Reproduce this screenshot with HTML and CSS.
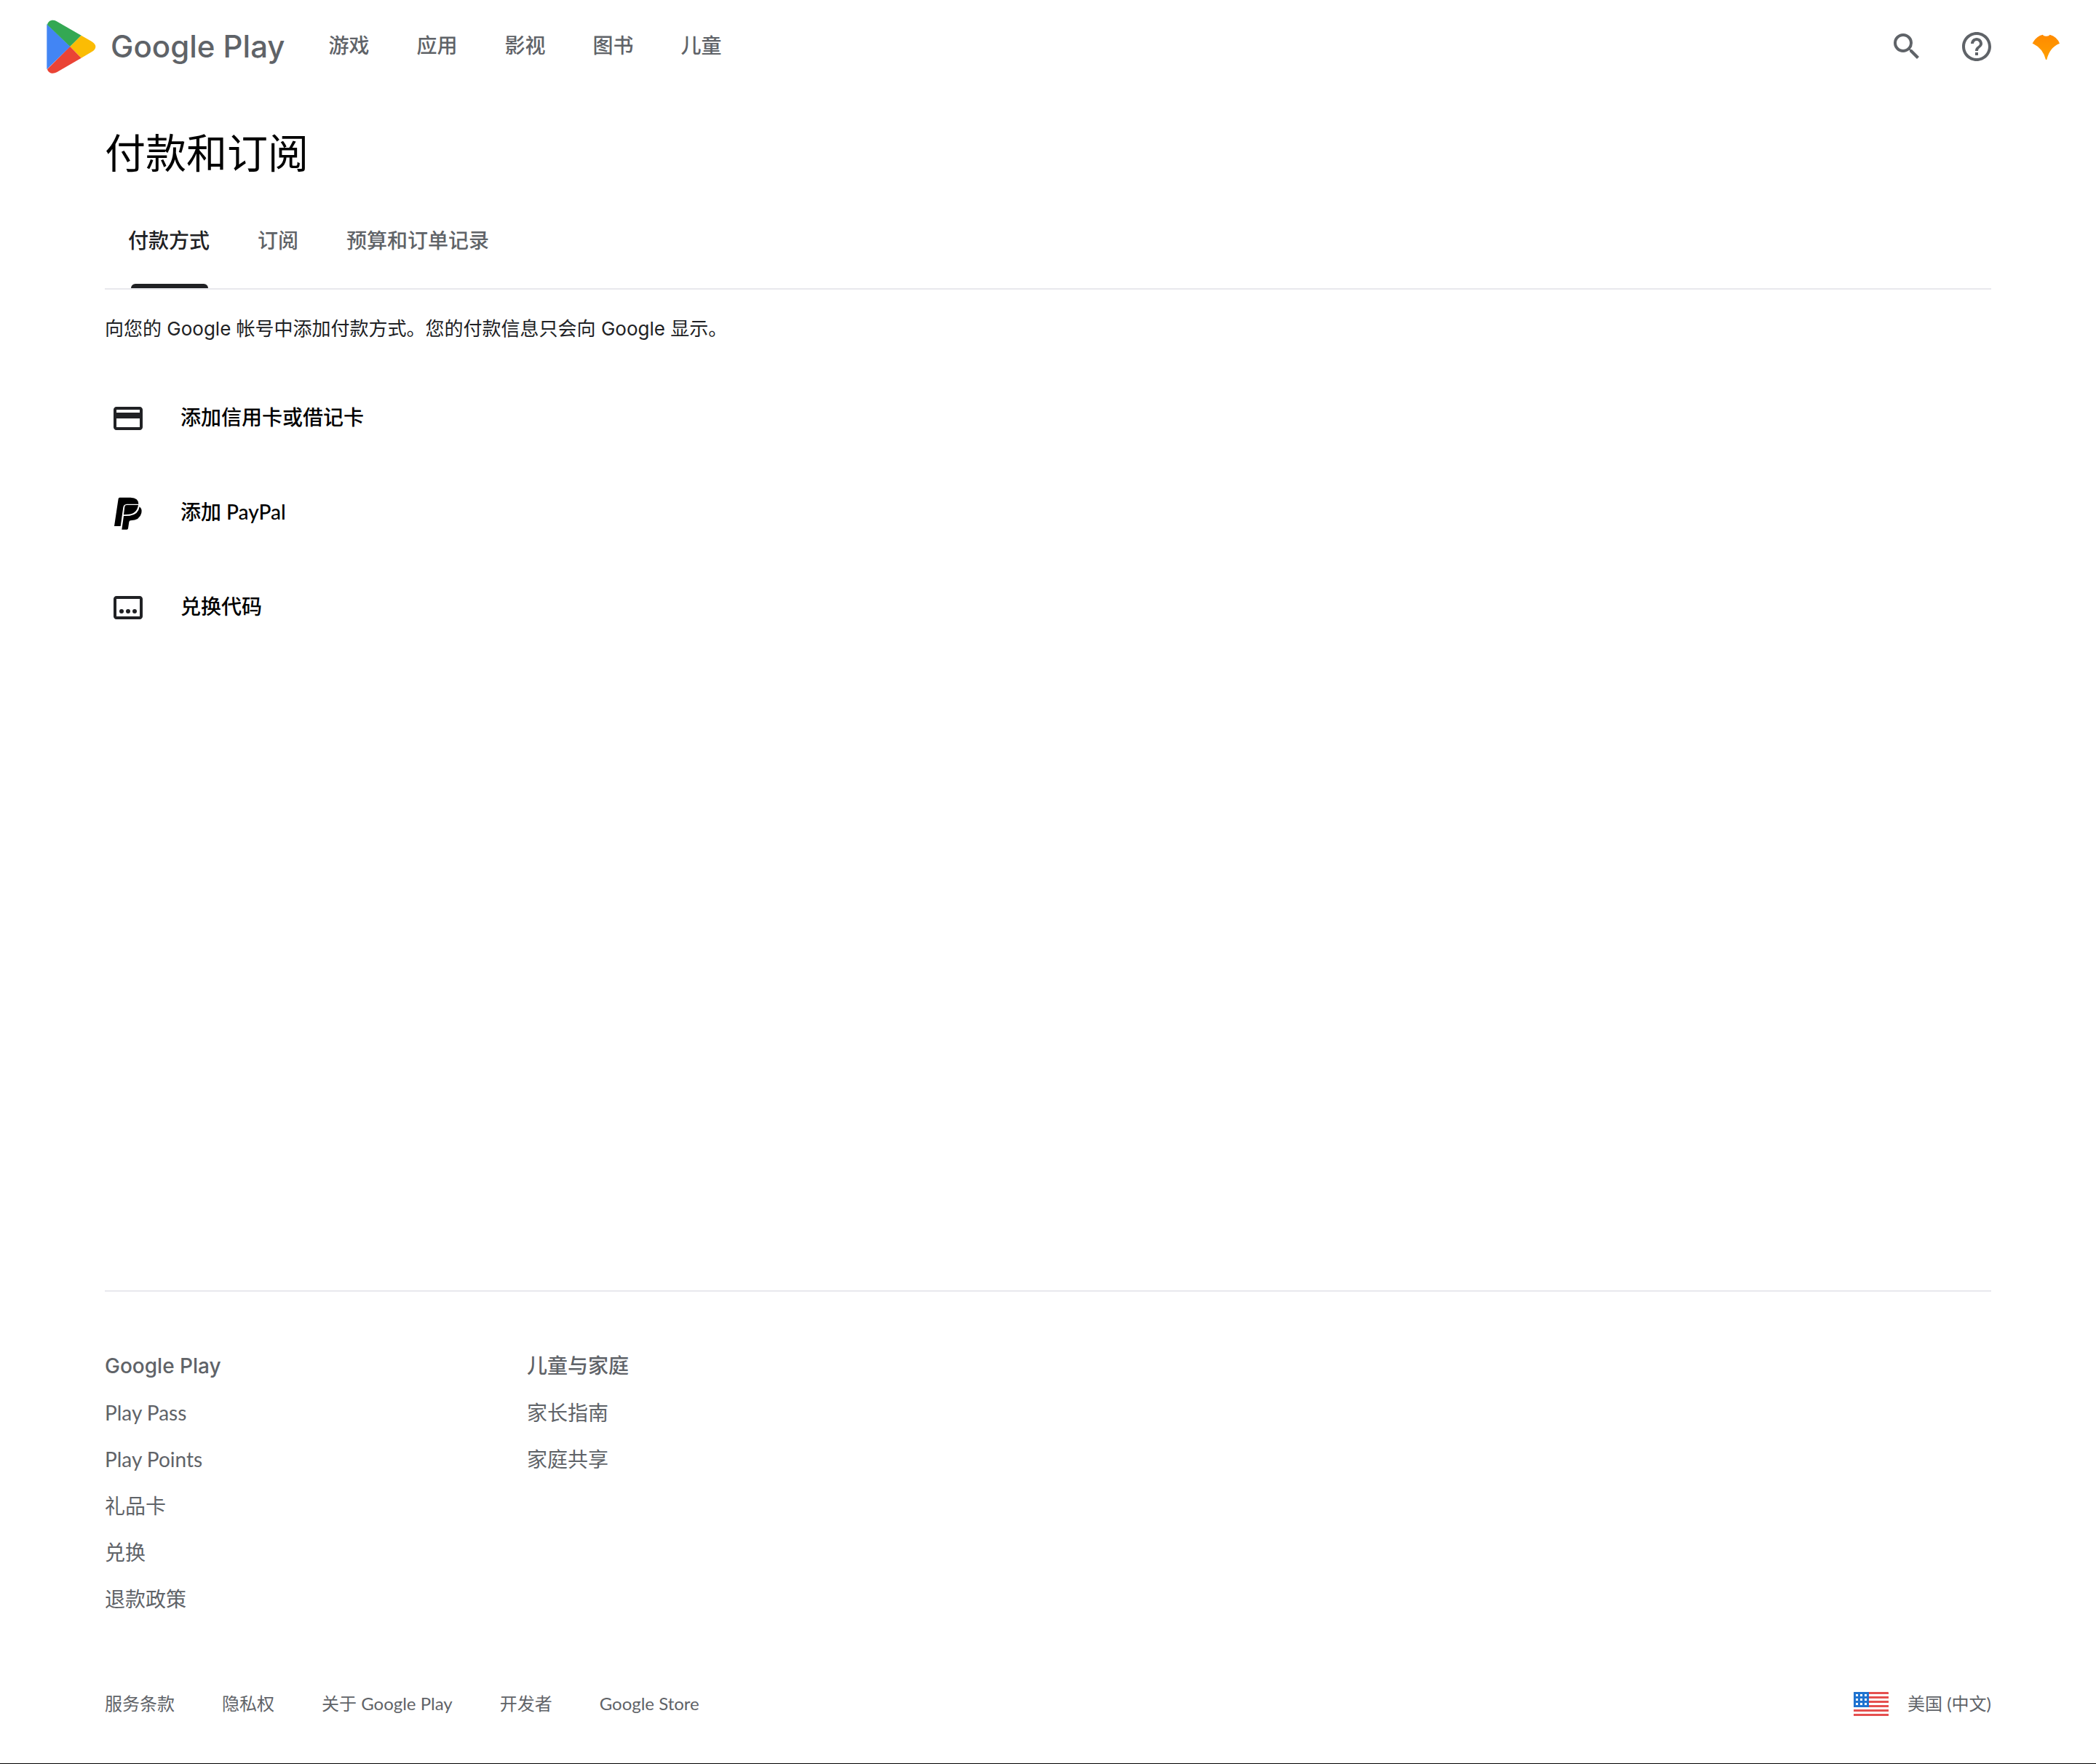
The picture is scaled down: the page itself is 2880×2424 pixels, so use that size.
FILE: index.html
```html
<!DOCTYPE html>
<html lang="zh-CN">
<head>
    <meta charset="UTF-8">
    <meta name="viewport" content="width=device-width, initial-scale=1.0">
    <title>付款和订阅 - Google Play</title>
    <link rel="stylesheet" href="styles.css">
</head>
<body>
    <header class="header">
        <a class="logo" href="#">
            <svg class="logo-mark" viewBox="72 80 204 222" aria-hidden="true">
                <path fill="#4285f4" d="M73 98L170 191L73 285Z"/>
                <path fill="#34a853" d="M75 101C79 82 98 78 112 86L215 145L169 191Z"/>
                <path fill="#fbbc04" d="M215 145L258 170Q274 180 274 191Q274 204 258 213L215 238L169 191Z"/>
                <path fill="#ea4335" d="M75 284L169 191L215 238L114 297C99 305 79 302 75 284Z"/>
            </svg>
            <span class="logo-text">Google Play</span>
        </a>
        <nav class="nav">
            <a href="#">游戏</a>
            <a href="#">应用</a>
            <a href="#">影视</a>
            <a href="#">图书</a>
            <a href="#">儿童</a>
        </nav>
        <div class="actions">
            <button class="icon-button" type="button" aria-label="搜索">
                <svg class="icon" viewBox="0 0 24 24"><path d="M15.5 14h-.79l-.28-.27A6.471 6.471 0 0 0 16 9.5 6.5 6.5 0 1 0 9.5 16c1.61 0 3.09-.59 4.23-1.57l.27.28v.79l5 4.99L20.49 19l-4.99-5zm-6 0C7.01 14 5 11.99 5 9.5S7.01 5 9.5 5 14 7.01 14 9.5 11.99 14 9.5 14z"/></svg>
            </button>
            <button class="icon-button" type="button" aria-label="帮助">
                <svg class="icon" viewBox="0 0 24 24"><path d="M11 18h2v-2h-2v2zm1-16C6.48 2 2 6.48 2 12s4.48 10 10 10 10-4.48 10-10S17.52 2 12 2zm0 18c-4.41 0-8-3.59-8-8s3.59-8 8-8 8 3.59 8 8-3.59 8-8 8zm0-14c-2.21 0-4 1.79-4 4h2c0-1.1.9-2 2-2s2 .9 2 2c0 2-3 1.75-3 5h2c0-2.25 3-2.5 3-5 0-2.21-1.79-4-4-4z"/></svg>
            </button>
            <button class="icon-button" type="button" aria-label="帐号">
                <svg class="icon" viewBox="684 90 144 144">
                    <defs>
                        <linearGradient id="leaf" x1="0" y1="0" x2="0" y2="1">
                            <stop offset="0" stop-color="#ff8a00"/>
                            <stop offset="1" stop-color="#ffa000"/>
                        </linearGradient>
                    </defs>
                    <path fill="url(#leaf)" d="M698 149Q712 120 740 113Q745 120 755 119Q765 120 770 113Q799 121 810 149Q768 166 757 216L753 216Q741 168 698 149Z"/>
                </svg>
            </button>
        </div>
    </header>

    <main class="main">
        <h1 class="title">付款和订阅</h1>
        <nav class="tabs">
            <a class="tab active" href="#" aria-current="page">付款方式</a>
            <a class="tab" href="#">订阅</a>
            <a class="tab" href="#">预算和订单记录</a>
        </nav>
        <p class="intro">向您的 Google 帐号中添加付款方式。您的付款信息只会向 Google 显示。</p>
        <div class="methods">
            <button class="method" type="button">
                <svg class="icon" viewBox="0 0 24 24" aria-hidden="true"><path d="M20 4H4c-1.110 0-2 .89-2 2v12c0 1.110.89 2 2 2h16c1.110 0 2-.89 2-2V6c0-1.110-.89-2-2-2zm0 14H4v-6h16v6zm0-10H4V6h16v2z"/></svg>
                添加信用卡或借记卡
            </button>
            <button class="method" type="button">
                <svg class="icon icon-paypal" viewBox="66 453 144 144" aria-hidden="true">
                    <path d="M103 461L148 461Q182 463 181 488L132 488Q120 489 118 501L107 579L81 579L98 466Q99 461 103 461Z"/>
                    <path d="M124 499Q125 492 132 492L180 492Q174 531 132 531L120 532Z"/>
                    <path d="M185 499Q197 508 193 525Q186 555 148 556Q143 556 142 562L138 589Q137 593 133 593L112 593L120 537L145 536Q180 532 185 499Z"/>
                </svg>
                添加 PayPal
            </button>
            <button class="method" type="button">
                <svg class="icon" viewBox="0 0 24 24" aria-hidden="true">
                    <path d="M20 4H4c-1.100 0-2 .9-2 2v12c0 1.100.9 2 2 2h16c1.100 0 2-.9 2-2V6c0-1.100-.9-2-2-2zm0 14H4V6h16v12z"/>
                    <circle cx="7.500" cy="14.500" r="1.500"/>
                    <circle cx="12" cy="14.500" r="1.500"/>
                    <circle cx="16.500" cy="14.500" r="1.500"/>
                </svg>
                兑换代码
            </button>
        </div>
    </main>

    <footer class="footer">
        <div class="footer-columns">
            <section class="footer-column">
                <h2>Google Play</h2>
                <a href="#">Play Pass</a>
                <a href="#">Play Points</a>
                <a href="#">礼品卡</a>
                <a href="#">兑换</a>
                <a href="#">退款政策</a>
            </section>
            <section class="footer-column">
                <h2>儿童与家庭</h2>
                <a href="#">家长指南</a>
                <a href="#">家庭共享</a>
            </section>
        </div>
        <div class="footer-bottom">
            <a href="#">服务条款</a>
            <a href="#">隐私权</a>
            <a href="#">关于 Google Play</a>
            <a href="#">开发者</a>
            <a href="#">Google Store</a>
            <a class="region" href="#">
                <svg class="flag" viewBox="0 0 48 33" aria-hidden="true">
                    <path fill="#fff" d="M0 0h48v33H0z"/>
                    <path fill="#e5504f" d="M0 1q0-1 1-1h46q1 0 1 1v2H0zM0 6h48v3H0zM0 12h48v3H0zM0 18h48v3H0zM0 24h48v3H0zM0 30h48v3H0z"/>
                    <path fill="#1f73d0" d="M0 1q0-1 1-1h20v21H0z"/>
                    <path fill="#fff" d="M3 3h3v3H3zM9 3h3v3H9zM15 3h3v3h-3zM3 9h3v3H3zM9 9h3v3H9zM15 9h3v3h-3zM3 15h3v3H3zM9 15h3v3H9zM15 15h3v3h-3z"/>
                </svg>
                美国 (中文)
            </a>
        </div>
    </footer>
</body>
</html>
```

FILE: styles.css
```css
* {
    box-sizing: border-box;
}

body {
    font-family: Lato, "Noto Sans CJK SC", sans-serif;
    font-size: 28px;
    line-height: 40px;
    margin: 0;
    min-height: 100vh;
    display: flex;
    flex-direction: column;
    color: #202124;
    background-color: #fff;
    border-bottom: 1px solid #000;
}

a {
    color: inherit;
    text-decoration: none;
}

button {
    font: inherit;
    color: inherit;
    background: none;
    border: none;
    padding: 0;
    cursor: pointer;
}

.icon {
    display: block;
    width: 48px;
    height: 48px;
    fill: currentColor;
}

.header {
    display: flex;
    align-items: center;
    height: 128px;
    padding: 0 44px 0 64px;
    color: #5f6368;
}

.logo {
    display: flex;
    align-items: center;
    gap: 20px;
}

.logo-mark {
    width: 68px;
    height: 74px;
}

.logo-text {
    font-family: Inter, sans-serif;
    font-size: 42px;
    font-weight: 500;
}

.nav {
    display: flex;
    gap: 65px;
    margin-left: 60px;
    padding-bottom: 4px;
    font-weight: 500;
}

.actions {
    display: flex;
    gap: 48px;
    margin-left: auto;
}

.main {
    flex: 1;
    padding: 46px 144px 0;
}

.title {
    margin: 0;
    font-size: 56px;
    font-weight: 400;
    line-height: 72px;
    color: #000;
}

.tabs {
    display: flex;
    gap: 66px;
    margin-top: 16px;
    padding: 0 32px;
    border-bottom: 2px solid #e8e8ed;
    font-weight: 500;
    color: #5f6368;
}

.tab {
    position: relative;
    padding: 48px 0 46px;
}

.tab.active {
    color: #202124;
}

.tab.active::after {
    content: "";
    position: absolute;
    left: 4px;
    right: 2px;
    bottom: 0;
    height: 6px;
    border-radius: 6px 6px 0 0;
    background-color: #202124;
}

.intro {
    margin: 34px 0 0;
    font-family: Inter, "Noto Sans CJK SC", sans-serif;
    font-size: 26px;
}

.methods {
    display: flex;
    flex-direction: column;
    align-items: flex-start;
    gap: 82px;
    margin-top: 79px;
    padding-left: 8px;
}

.method {
    display: flex;
    align-items: flex-start;
    gap: 48px;
    font-weight: 500;
    line-height: 44px;
    color: #000;
}

.method .icon {
    color: #202124;
}

.method .icon-paypal {
    color: #000;
}

.footer {
    margin: 0 144px;
    padding: 82px 0 62px;
    border-top: 2px solid #e8e8ed;
    color: #5f6368;
}

.footer-columns {
    display: flex;
}

.footer-column {
    display: flex;
    flex-direction: column;
    gap: 24px;
    width: 580px;
}

.footer-column h2 {
    margin: 0;
    font-family: Inter, "Noto Sans CJK SC", sans-serif;
    font-size: 28px;
    font-weight: 500;
}

.footer-bottom {
    display: flex;
    align-items: center;
    gap: 65px;
    margin-top: 104px;
    font-size: 24px;
}

.region {
    display: flex;
    align-items: center;
    gap: 26px;
    margin-left: auto;
}

.flag {
    width: 48px;
    height: 33px;
}
```
